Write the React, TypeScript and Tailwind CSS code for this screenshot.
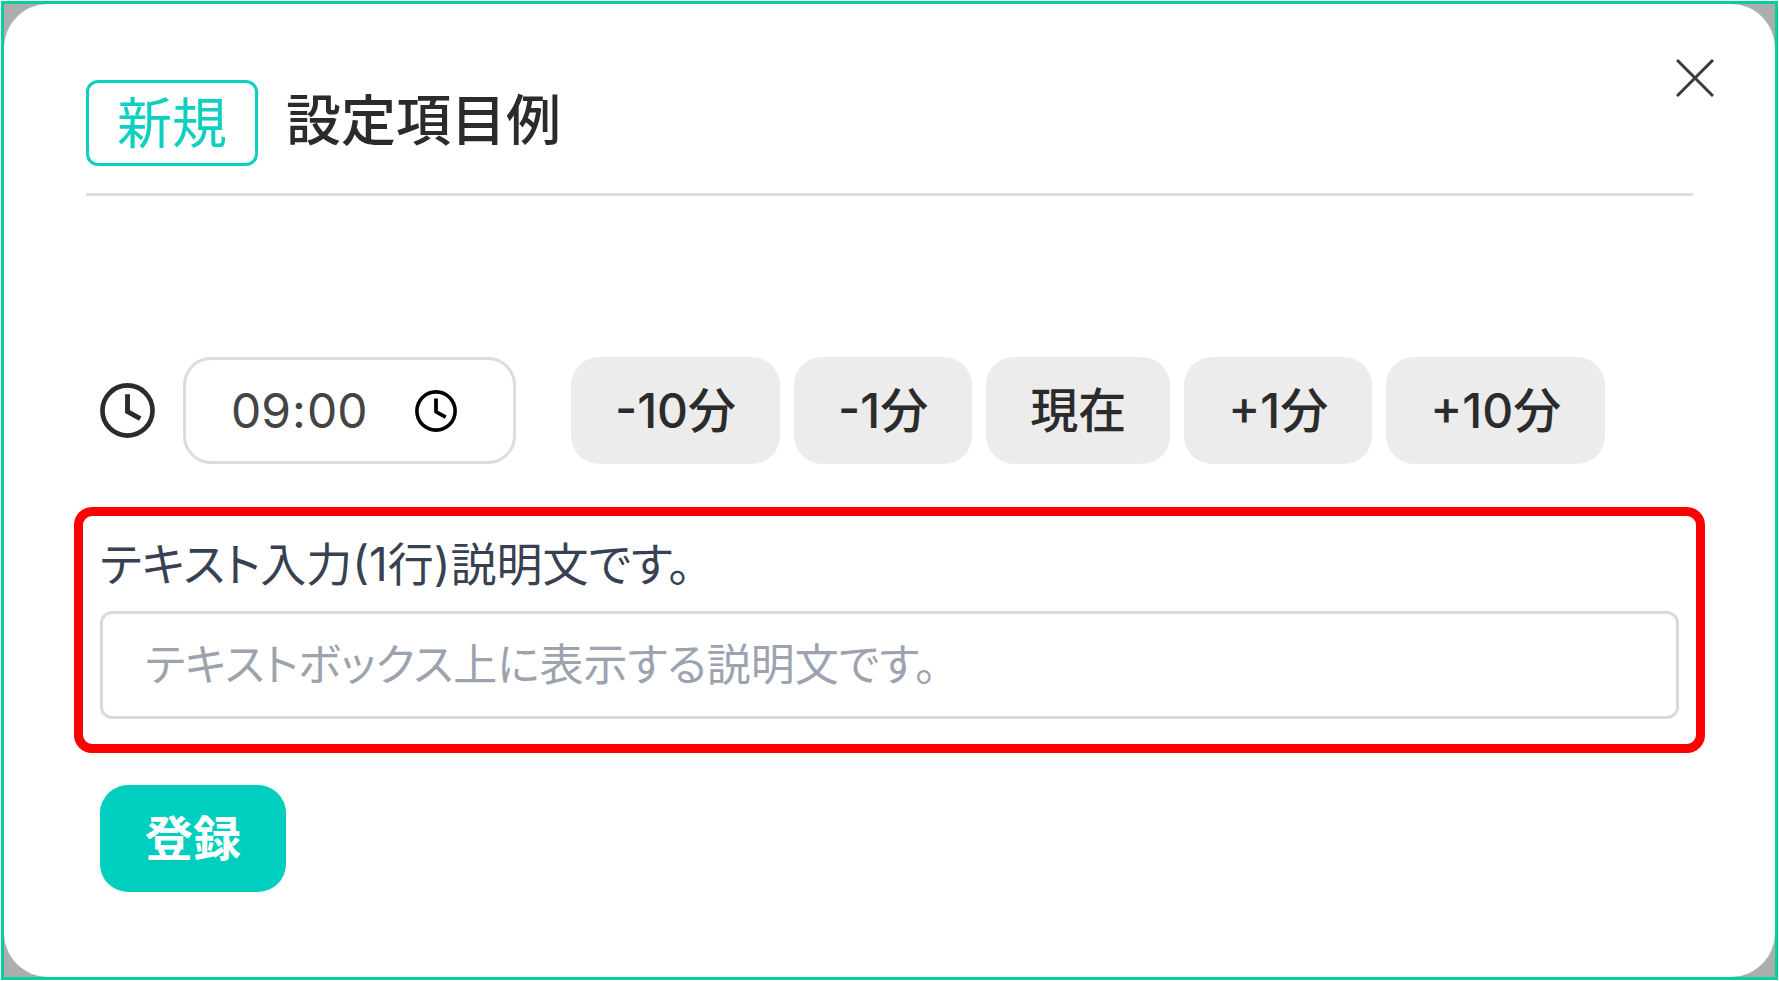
import { useState } from "react";

const stepButtons = [
  { label: "-10分", minutes: -10 },
  { label: "-1分", minutes: -1 },
  { label: "現在", minutes: 0 },
  { label: "+1分", minutes: 1 },
  { label: "+10分", minutes: 10 },
];

function shiftTime(time: string, minutes: number) {
  const [h, m] = time.split(":").map(Number);
  const total = (h * 60 + m + minutes + 1440) % 1440;
  return [Math.floor(total / 60), total % 60]
    .map((n) => String(n).padStart(2, "0"))
    .join(":");
}

function ClockIcon({ className }: { className: string }) {
  return (
    <svg viewBox="0 0 54 54" fill="none" stroke="currentColor" className={className} aria-hidden="true">
      <circle cx="27" cy="27" r="24.6" strokeWidth="4.6" />
      <path d="M27 11v17l12.5 7" strokeWidth="4.8" />
    </svg>
  );
}

export default function App() {
  const [time, setTime] = useState("09:00");

  const step = (minutes: number) => {
    if (minutes === 0) {
      setTime(new Date().toTimeString().slice(0, 5));
    } else {
      setTime(shiftTime(time, minutes));
    }
  };

  return (
    <div className="min-h-screen flex p-px bg-white font-['Inter','Noto_Sans_CJK_JP',sans-serif] text-[#2b2b2b]">
      <div className="flex-1 flex border-3 border-[#00d09c] bg-[#adadad]">
        <div role="dialog" aria-labelledby="dialog-title" className="relative flex-1 rounded-[44px] bg-white px-[70px] pt-[76px] pb-20">
          <button type="button" aria-label="閉じる" className="absolute top-[55px] right-[61px]">
            <svg viewBox="0 0 38 38" className="w-[38px] h-[38px]" fill="none" stroke="#3a3a3a" strokeWidth="3">
              <path d="M1 1l36 36M37 1L1 37" />
            </svg>
          </button>

          {/* Header */}
          <header className="mx-3 pb-[27px] flex items-start gap-7 border-b-3 border-[#dedede] text-[55px] leading-[80px]">
            <span className="px-7 border-3 border-[#0fd0c0] rounded-xl text-[#0fd0c0]">新規</span>
            <h1 id="dialog-title" className="font-medium">設定項目例</h1>
          </header>

          {/* Time row */}
          <div className="mt-[161px] ml-[26px] flex flex-wrap items-center text-[48px] leading-[60px]">
            <ClockIcon className="w-[55px] h-[55px] mr-7" />
            <div className="w-[333px] h-[107px] mr-[55px] pl-[44px] pr-14 flex items-center justify-between border-3 border-[#dcdcdc] rounded-[28px]">
              <input
                type="time"
                aria-label="時刻"
                value={time}
                onChange={(e) => setTime(e.target.value)}
                className="w-[150px] text-[#444] outline-none [&::-webkit-calendar-picker-indicator]:hidden [&::-webkit-datetime-edit-ampm-field]:hidden"
              />
              <button type="button" aria-label="時刻を選択" className="text-black">
                <ClockIcon className="w-[42px] h-[42px]" />
              </button>
            </div>
            <div className="flex flex-wrap gap-3.5">
              {stepButtons.map((b) => (
                <button
                  key={b.label}
                  type="button"
                  onClick={() => step(b.minutes)}
                  className="h-[107px] px-11 rounded-[28px] bg-[#ececec] font-medium"
                >
                  {b.label}
                </button>
              ))}
            </div>
          </div>

          {/* Text field */}
          <div className="mt-[43px] px-[17px] pt-3 pb-[25px] border-9 border-[#ff0000] rounded-[18px]">
            <label htmlFor="description" className="block mb-[11px] text-[46px] leading-[72px] text-[#374151] [font-feature-settings:'palt']">
              テキスト入力(1行)説明文です。
            </label>
            <input
              id="description"
              type="text"
              placeholder="テキストボックス上に表示する説明文です。"
              className="block w-full h-[108px] px-[42px] border-3 border-[#dadada] rounded-xl outline-none text-[44px] placeholder:text-[#9ca3af] [font-feature-settings:'palt']"
            />
          </div>

          <button type="submit" className="mt-8 ml-[26px] h-[107px] px-[45px] rounded-[28px] bg-[#00cebe] text-white text-[48px] font-bold">
            登録
          </button>
        </div>
      </div>
    </div>
  );
}
